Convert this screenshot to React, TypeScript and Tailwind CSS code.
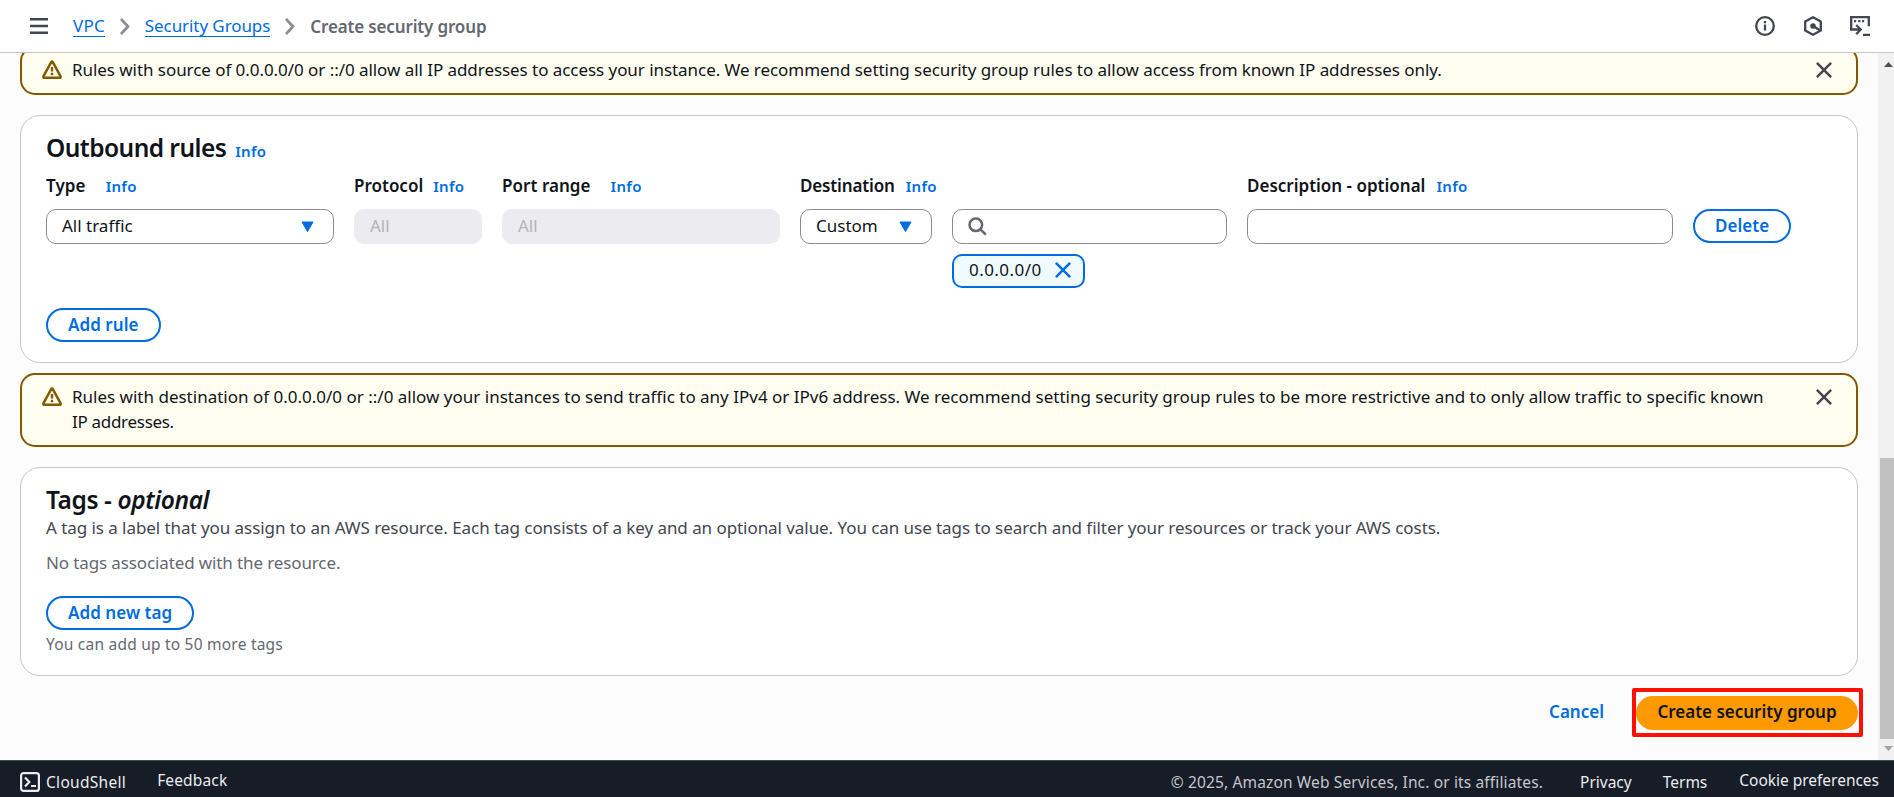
import type { ReactNode } from "react";

function Info({ className = "" }: { className?: string }) {
  return (
    <a className={`text-[15px] font-semibold tracking-[0.3px] text-[#006ce0] ${className}`}>Info</a>
  );
}

function Label({ children, className = "" }: { children: ReactNode; className?: string }) {
  return <div className={`flex h-[25px] items-baseline text-[17px] leading-[25px] font-semibold ${className}`}>{children}</div>;
}

function OutlineButton({ children, className = "" }: { children: ReactNode; className?: string }) {
  return (
    <button
      className={`flex h-[34px] items-center rounded-full border-2 border-[#006ce0] bg-white px-5 pb-px text-[17px] font-semibold tracking-[0.05px] whitespace-nowrap text-[#006ce0] ${className}`}
    >
      {children}
    </button>
  );
}

function Caret() {
  return (
    <svg className="h-[12px] w-[13px] shrink-0" viewBox="0 0 13 12" fill="#006ce0" stroke="#006ce0" strokeLinejoin="round">
      <path d="M1 1h11l-5.5 9.6z" />
    </svg>
  );
}

function Close({ className = "", color = "#424650" }: { className?: string; color?: string }) {
  return (
    <svg className={`shrink-0 ${className}`} viewBox="0 0 16 16" fill="none" stroke={color} strokeWidth="2.5">
      <path d="M0.9 0.9l14.2 14.2M15.1 0.9L0.9 15.1" />
    </svg>
  );
}

function Chevron() {
  return (
    <svg className="h-[17px] w-[10px] shrink-0" viewBox="0 0 10 17" fill="none" stroke="#8c8c94" strokeWidth="2.7">
      <path d="M1 1l7 7.5L1 16" />
    </svg>
  );
}

function Alert({ children, className = "" }: { children: ReactNode; className?: string }) {
  return (
    <div className={`flex w-[1838px] shrink-0 items-start rounded-[15px] border-2 border-[#855900] bg-[#fffef0] pt-[9px] pr-[24px] pl-5 ${className}`}>
      <svg className="mt-[3px] h-5 w-5 shrink-0" viewBox="0 0 20 20" fill="none" stroke="#855900" strokeWidth="2.5" strokeLinejoin="round">
        <path d="M9.2 2.2Q10 1 10.8 2.2L18.6 16.4Q18.9 17.7 17.6 17.8H2.4Q1.1 17.7 1.4 16.4z" />
        <path d="M10 7v4.4M10 12.8v2.4" strokeWidth="2.4" />
      </svg>
      <div className="ml-[10px] flex-1 text-[17px] leading-[25px]">{children}</div>
      <Close className="mt-[5px] h-[16px] w-[16px]" />
    </div>
  );
}

export default function App() {
  return (
    <div className="flex h-[797px] w-[1894px] flex-col overflow-hidden bg-[#fcfcfd] font-['Noto_Sans',sans-serif] text-[#0f141a]">
      <header className="flex h-[53px] shrink-0 items-center border-b border-[#c6c6cd] bg-white pr-[24px] pl-[30px] text-[17px]">
        <svg className="h-[16px] w-[18px]" viewBox="0 0 18 16" fill="#424650">
          <path d="M0 0h18v2.5H0zM0 6.75h18v2.5H0zM0 13.5h18V16H0z" />
        </svg>
        <a className="ml-[25px] h-[21px] border-b border-[#006ce0] leading-[19px] tracking-[0.2px] text-[#006ce0]">VPC</a>
        <div className="w-[15px]" />
        <Chevron />
        <a className="ml-[15px] h-[21px] border-b border-[#006ce0] leading-[19px] tracking-[-0.08px] text-[#006ce0]">Security Groups</a>
        <div className="w-[15px]" />
        <Chevron />
        <span className="ml-[15px] leading-[19px] font-semibold tracking-[-0.15px] text-[#656871]">Create security group</span>
        <div className="ml-auto flex items-center">
          <svg className="h-5 w-5" viewBox="0 0 20 20" fill="none" stroke="#424650" strokeWidth="2.3">
            <circle cx="10" cy="10" r="8.8" />
            <path d="M10 8.6v6M10 5v2.3" />
          </svg>
          <svg className="ml-[28px] h-5 w-5" viewBox="0 0 20 20" fill="none" stroke="#424650" strokeWidth="2.3" strokeLinejoin="round">
            <path d="M10 1.2l7.8 4.3v9L10 18.8l-7.8-4.3v-9z" />
            <circle cx="10" cy="10" r="1.6" fill="#424650" />
            <path d="M10 10l6.5 4" />
          </svg>
          <svg className="ml-[27px] h-5 w-5" viewBox="0 0 20 20" fill="none" stroke="#424650" strokeWidth="2.3">
            <path d="M1.2 13.5V1.2h17.6v9M4 5.2h2.2M8.2 5.2h2.2M12 5.2h2.2M0 13.5h10.5M6.2 9l4.5 4.5-4.5 4.8M13 19H20" />
          </svg>
        </div>
      </header>

      <div className="flex h-[707px] shrink-0">
        <main className="flex min-w-0 flex-1 flex-col overflow-hidden pl-5">
          <Alert className="-mt-[7px] h-[49px]">
            <span className="tracking-[-0.055px]">
              Rules with source of 0.0.0.0/0 or ::/0 allow all IP addresses to access your instance. We recommend setting security group rules to allow access from known IP addresses only.
            </span>
          </Alert>

          <section className="mt-5 h-[248px] w-[1838px] shrink-0 rounded-[20px] border border-[#c6c6cd] bg-white pl-[25px]">
            <div className="mt-[16px] flex h-[32px] items-baseline">
              <h2 className="text-[24.5px] leading-[32px] font-semibold tracking-[-0.55px]">Outbound rules</h2>
              <Info className="ml-[9px]" />
            </div>
            <div className="mt-[9px] flex items-start gap-5">
              <div className="w-[288px]">
                <Label>
                  <span className="tracking-[0.1px]">Type</span>
                  <Info className="ml-5" />
                </Label>
                <div className="mt-[11px] flex h-[35px] items-center justify-between rounded-[10px] border border-[#8c8c94] pr-[19px] pl-[15px] text-[17px]">
                  <span className="pb-[2px]">All traffic</span>
                  <Caret />
                </div>
              </div>
              <div className="w-[128px]">
                <Label>
                  <span>Protocol</span>
                  <Info className="ml-[10px]" />
                </Label>
                <div className="mt-[11px] flex h-[35px] items-center rounded-[10px] bg-[#ebebf0] pb-[2px] pl-4 text-[17px] text-[#b4b4bb]">All</div>
              </div>
              <div className="w-[278px]">
                <Label>
                  <span className="tracking-[0.05px]">Port range</span>
                  <Info className="ml-5" />
                </Label>
                <div className="mt-[11px] flex h-[35px] items-center rounded-[10px] bg-[#ebebf0] pb-[2px] pl-4 text-[17px] text-[#b4b4bb]">All</div>
              </div>
              <div className="w-[427px]">
                <Label>
                  <span className="tracking-[-0.15px]">Destination</span>
                  <Info className="ml-[11px]" />
                </Label>
                <div className="mt-[11px] flex gap-5">
                  <div className="flex h-[35px] w-[132px] items-center justify-between rounded-[10px] border border-[#8c8c94] pr-[19px] pl-[15px] text-[17px]">
                    <span className="pb-[2px]">Custom</span>
                    <Caret />
                  </div>
                  <div className="flex w-[275px] flex-col items-start gap-[10px]">
                    <div className="flex h-[35px] w-full items-center rounded-[10px] border border-[#8c8c94] pb-px pl-[15px]">
                      <svg className="h-[19px] w-[19px]" viewBox="0 0 19 19" fill="none" stroke="#656871" strokeWidth="2.5">
                        <circle cx="7.8" cy="7.8" r="6.3" />
                        <path d="M12.2 12.2l5.6 5.4" />
                      </svg>
                    </div>
                    <div className="flex h-[34px] w-[133px] items-center justify-between rounded-[10px] border-2 border-[#006ce0] bg-[#f0fbff] pr-[12px] pl-[15px] text-[17px]">
                      <span className="pb-[3px] tracking-[0.45px]">0.0.0.0/0</span>
                      <Close className="mb-[2px] h-[16px] w-[16px]" color="#006ce0" />
                    </div>
                  </div>
                </div>
              </div>
              <div className="w-[426px]">
                <Label>
                  <span>Description - optional</span>
                  <Info className="ml-[11px]" />
                </Label>
                <div className="mt-[11px] h-[35px] rounded-[10px] border border-[#8c8c94]" />
              </div>
              <OutlineButton className="mt-[36px]">Delete</OutlineButton>
            </div>
            <OutlineButton className="mt-5">Add rule</OutlineButton>
          </section>

          <Alert className="mt-[10px] h-[74px]">
            Rules with destination of 0.0.0.0/0 or ::/0 allow your instances to send traffic to any IPv4 or IPv6 address. We recommend setting security group rules to be more restrictive and to only allow traffic to specific known
            <br />
            <span className="tracking-[-0.3px]">IP addresses.</span>
          </Alert>

          <section className="mt-5 flex h-[209px] w-[1838px] shrink-0 flex-col items-start rounded-[20px] border border-[#c6c6cd] bg-white pl-[25px]">
            <h2 className="mt-[16px] text-[24.5px] leading-[32px] font-semibold tracking-[-0.4px]">
              Tags - <i>optional</i>
            </h2>
            <p className="mt-[-1px] text-[17px] leading-[25px] tracking-[-0.06px] text-[#424650]">
              A tag is a label that you assign to an AWS resource. Each tag consists of a key and an optional value. You can use tags to search and filter your resources or track your AWS costs.
            </p>
            <p className="mt-[10px] text-[17px] leading-[25px] tracking-[-0.12px] text-[#656871]">No tags associated with the resource.</p>
            <OutlineButton className="mt-[21px]">Add new tag</OutlineButton>
            <p className="mt-[4px] text-[15.5px] leading-5 tracking-[0.22px] text-[#656871]">You can add up to 50 more tags</p>
          </section>

          <div className="mt-[12px] flex h-[49px] w-[1843px] shrink-0 items-center justify-end">
            <a className="mr-[28px] pb-[2px] text-[17px] font-semibold text-[#006ce0]">Cancel</a>
            <div className="rounded-[2px] border-4 border-[#ff0f00] pt-[4px] pr-[1px] pb-[3px]">
              <button className="flex h-[34px] w-[222px] items-center justify-center rounded-full bg-[#ff9900] pb-[2px] text-[17px] font-semibold">Create security group</button>
            </div>
          </div>
        </main>

        <div className="flex w-[16px] flex-col items-end bg-[#f1f1f1]">
          <svg className="mt-[9px] mr-[1px] h-[5px] w-[9px]" viewBox="0 0 9 5" fill="#505050">
            <path d="M4.5 0L9 5H0z" />
          </svg>
          <div className="mt-[391px] h-[281px] w-[14px] bg-[#c1c1c1]" />
          <svg className="mt-[7px] mr-[1px] h-[5px] w-[9px]" viewBox="0 0 9 5" fill="#a3a3a3">
            <path d="M0 0h9L4.5 5z" />
          </svg>
        </div>
      </div>

      <footer className="flex h-[37px] shrink-0 items-center border-t border-[#424650] bg-[#161d26] pt-[5px] pr-[15px] pl-5 text-[15.5px] leading-5 text-[#ebebf0]">
        <svg className="mt-px h-5 w-5" viewBox="0 0 20 20" fill="none" stroke="#ebebf0" strokeWidth="2.2">
          <rect x="1.1" y="1.1" width="17.8" height="17.8" rx="2.5" />
          <path d="M5 5.6l4.3 4.4L5 14.4M11 14H16" />
        </svg>
        <span className="ml-[6px] tracking-[0.3px]">CloudShell</span>
        <span className="ml-[31px] pb-[3px] tracking-[0.15px]">Feedback</span>
        <span className="ml-auto tracking-[0.14px] text-[#c6c6cd]">© 2025, Amazon Web Services, Inc. or its affiliates.</span>
        <span className="ml-[37px]">Privacy</span>
        <span className="ml-[31px]">Terms</span>
        <span className="ml-[32px] pb-[3px] tracking-[-0.02px]">Cookie preferences</span>
      </footer>
    </div>
  );
}
